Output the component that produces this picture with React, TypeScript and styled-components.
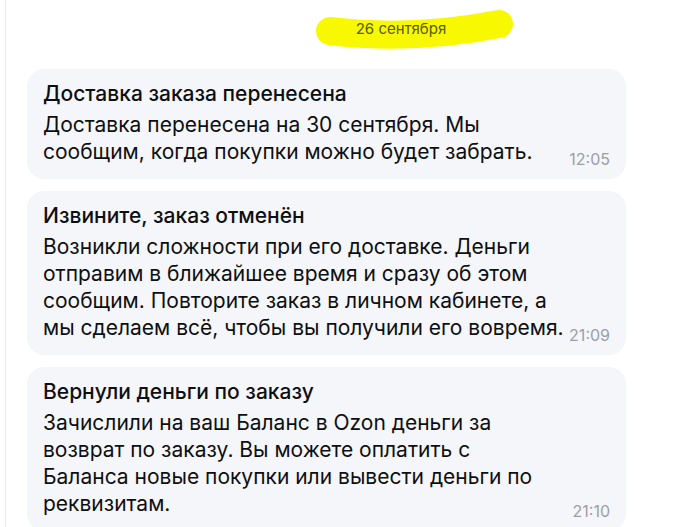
import React from 'react'
import styled, { createGlobalStyle } from 'styled-components'

type Message = {
  title: string;
  lines: string[];
  time: string;
};

const messages: Message[] = [
  {
    title: 'Доставка заказа перенесена',
    lines: ['Доставка перенесена на 30 сентября. Мы', 'сообщим, когда покупки можно будет забрать.'],
    time: '12:05',
  },
  {
    title: 'Извините, заказ отменён',
    lines: [
      'Возникли сложности при его доставке. Деньги',
      'отправим в ближайшее время и сразу об этом',
      'сообщим. Повторите заказ в личном кабинете, а',
      'мы сделаем всё, чтобы вы получили его вовремя.',
    ],
    time: '21:09',
  },
  {
    title: 'Вернули деньги по заказу',
    lines: [
      'Зачислили на ваш Баланс в Ozon деньги за',
      'возврат по заказу. Вы можете оплатить с',
      'Баланса новые покупки или вывести деньги по',
      'реквизитам.',
    ],
    time: '21:10',
  },
]

export default function App() {
  return (
    <>
      <GlobalStyle />
      <Page>
        <DateRow>
          <DateLabel>
            {/* маркерное выделение даты */}
            <Marker width="200" height="46" viewBox="0 0 200 46">
              <path d="M14 26 Q 95 36 183 19" stroke="#f8f800" strokeWidth="28" strokeLinecap="round" fill="none" />
            </Marker>
            <DateText>26 сентября</DateText>
          </DateLabel>
        </DateRow>
        <Feed>
          {messages.map(message => (
            <Bubble key={message.time}>
              <Title>{message.title}</Title>
              <Body>
                {message.lines.map((line, i) => (
                  <React.Fragment key={i}>
                    {i > 0 && <br />}
                    {line}
                  </React.Fragment>
                ))}
                <Time>{message.time}</Time>
              </Body>
            </Bubble>
          ))}
        </Feed>
      </Page>
    </>
  )
}

const GlobalStyle = createGlobalStyle`
  html, body {
    margin: 0;
    padding: 0;
    background: #ffffff;
    overflow: hidden;
  }
  body {
    font-family: Inter, Roboto, "Liberation Sans", sans-serif;
    color: #0e0f11;
  }
`

const Page = styled.main`
  margin-left: 5px;
  border-left: 1px solid #ececec;
  min-height: 527px;
  width: 650px;
`

const DateRow = styled.div`
  display: flex;
  justify-content: center;
  padding: 18px 0 0 140px;
  height: 69px;
  box-sizing: border-box;
`

const DateLabel = styled.div`
  position: relative;
  height: 20px;
  display: flex;
  align-items: center;
`

const Marker = styled.svg`
  position: absolute;
  left: -40px;
  top: -13px;
  z-index: 0;
`

const DateText = styled.span`
  position: relative;
  font-size: 15px;
  color: #58591f;
`

const Feed = styled.section`
  display: flex;
  flex-direction: column;
  gap: 12px;
  padding-left: 21px;
  width: 599px;
`

const Bubble = styled.article`
  background: #f5f6fa;
  border-radius: 17px;
  padding: 12px 16px 12px 16px;
  display: flow-root;
`

const Title = styled.h3`
  margin: 0 0 4px 0;
  font-size: 21px;
  line-height: 26px;
  font-weight: 500;
`

const Body = styled.p`
  margin: 0;
  font-size: 21px;
  line-height: 27px;
  font-weight: 400;
`

const Time = styled.span`
  float: right;
  margin: 13px 0 0 4px;
  font-size: 16px;
  line-height: 16px;
  color: #9b9ea6;
`
